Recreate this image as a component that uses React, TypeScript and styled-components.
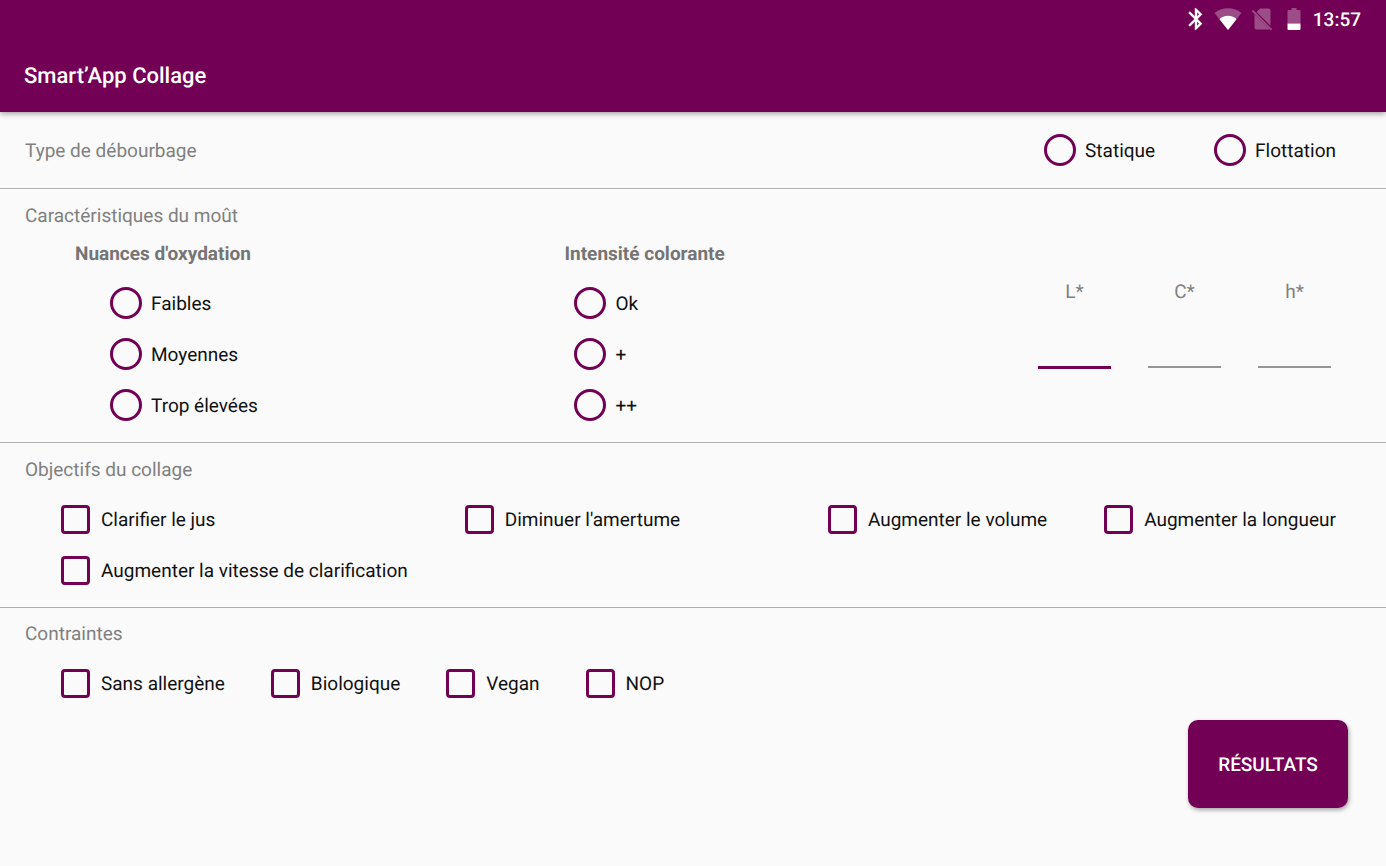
import React from "react";
import styled, { createGlobalStyle } from "styled-components";

const plum = "#720055";

const GlobalStyle = createGlobalStyle`
  *, *::before, *::after { box-sizing: border-box; }
  body {
    margin: 0;
    background: #fafafa;
    color: #111;
    font-family: Roboto, "Noto Sans", sans-serif;
    font-size: 19px;
    line-height: 24px;
    text-rendering: geometricPrecision;
  }
  h1, h2, h3, p { margin: 0; }
`;

const Page = styled.div`
  min-height: 100vh;
  display: flex;
  flex-direction: column;
`;

const Header = styled.header`
  background: ${plum};
  color: #fff;
  box-shadow: 0 1px 6px rgba(0, 0, 0, 0.45);
`;

const StatusBar = styled.div`
  display: flex;
  justify-content: flex-end;
  align-items: center;
  height: 38px;
  padding-right: 25px;
`;

const StatusIcon = styled.svg<{ $gap: number }>`
  flex: none;
  margin-right: ${(p) => p.$gap}px;
  fill: currentColor;
`;

const Clock = styled.time`
  padding-top: 2px;
  font-weight: 500;
`;

const Title = styled.h1`
  display: flex;
  align-items: center;
  height: 74px;
  padding: 3px 24px 0;
  font-size: 22px;
  font-weight: 500;
`;

const Section = styled.section`
  padding: 15px 50px 21px 25px;
  border-bottom: 1px solid #b0b0b0;
`;

const InlineSection = styled(Section)`
  display: flex;
  justify-content: space-between;
  align-items: center;
  padding: 22px 50px 22px 25px;
`;

const LastSection = styled(Section)`
  border-bottom: 0;
  padding-top: 14px;
  padding-bottom: 0;
`;

const SectionTitle = styled.h2`
  color: #808080;
  font-size: 19px;
  font-weight: 400;

  ${InlineSection} > & {
    padding-top: 2px;
  }
`;

const GroupTitle = styled.h3`
  color: #757575;
  font-size: 19px;
  font-weight: 700;
`;

const RadioRow = styled.div`
  display: flex;
  gap: 59px;
`;

const RadioColumn = styled.div<{ $indent: number }>`
  display: grid;
  justify-items: start;
  gap: 19px;
  padding: 21px 0 0 ${(p) => p.$indent}px;
`;

const OptionLabel = styled.label<{ $gap: number }>`
  display: flex;
  align-items: center;
  gap: ${(p) => p.$gap}px;
  min-height: 32px;
  white-space: nowrap;
  cursor: pointer;
`;

const OptionText = styled.span`
  padding-top: 2px;
`;

const RadioInput = styled.input`
  appearance: none;
  flex: none;
  width: 32px;
  height: 32px;
  margin: 0;
  border: 3px solid ${plum};
  border-radius: 50%;

  &:checked {
    background: radial-gradient(${plum} 0 8px, transparent 9px);
  }
`;

const CheckInput = styled.input`
  appearance: none;
  flex: none;
  width: 29px;
  height: 29px;
  margin: 0;
  border: 3px solid ${plum};
  border-radius: 4px;

  &:checked {
    background: ${plum};
    box-shadow: inset 0 0 0 3px #fafafa;
  }
`;

const MustGrid = styled.div`
  display: grid;
  grid-template-columns: 490fr 474fr auto;
  padding: 14px 5px 0 50px;
`;

const Measures = styled.div`
  display: flex;
  gap: 37px;
  padding-top: 38px;
`;

const MeasureLabel = styled.label`
  display: flex;
  flex-direction: column;
  align-items: center;
  gap: 25px;
  width: 73px;
  color: #808080;
`;

const MeasureInput = styled.input<{ $active: boolean }>`
  width: 100%;
  height: 40px;
  padding: 0 4px 8px;
  border: 0;
  background: linear-gradient(
      ${(p) => (p.$active ? plum : "#949494")},
      ${(p) => (p.$active ? plum : "#949494")}
    )
    0 37px / 100% ${(p) => (p.$active ? 3 : 2)}px no-repeat;
  font: inherit;
  text-align: center;
  outline: 0;
`;

const GoalGrid = styled.div`
  display: grid;
  grid-template-columns: auto 1fr auto auto;
  gap: 19px 57px;
  padding: 21px 0 0 36px;
`;

const ConstraintRow = styled.div`
  display: flex;
  flex-wrap: wrap;
  gap: 19px 46px;
  padding: 21px 0 0 36px;
`;

const Actions = styled.div`
  display: flex;
  justify-content: flex-end;
  padding: 21px 38px 56px;
`;

const ResultButton = styled.button`
  min-width: 160px;
  height: 88px;
  padding: 2px 16px 0;
  border: 0;
  border-radius: 10px;
  background: ${plum};
  color: #fff;
  font: inherit;
  font-weight: 500;
  text-transform: uppercase;
  text-rendering: inherit;
  box-shadow: 1px 2px 4px rgba(0, 0, 0, 0.35);
  cursor: pointer;
`;

function Radio({ name, label }: { name: string; label: string }) {
  return (
    <OptionLabel $gap={9}>
      <RadioInput type="radio" name={name} value={label} />
      <OptionText>{label}</OptionText>
    </OptionLabel>
  );
}

function Check({ label }: { label: string }) {
  return (
    <OptionLabel $gap={11}>
      <CheckInput type="checkbox" />
      <OptionText>{label}</OptionText>
    </OptionLabel>
  );
}

function StatusIcons() {
  return (
    <>
      <StatusIcon $gap={5} width="26" height="26" viewBox="0 0 24 24" aria-label="Bluetooth">
        <path
          stroke="currentColor"
          strokeWidth=".2"
          d="M17.71 7.71L12 2h-1v7.59L6.41 5 5 6.41 10.59 12 5 17.59 6.41 19 11 14.41V22h1l5.71-5.71-4.3-4.29 4.3-4.29zM13 5.83l1.88 1.88L13 9.59V5.83zm1.88 10.46L13 18.17v-3.76l1.88 1.88z"
        />
      </StatusIcon>
      <StatusIcon $gap={9} width="28" height="22" viewBox="0 0 28 22" aria-label="Wi-Fi">
        <path opacity=".3" d="M14 22L.5 5C4 2 9 .2 14 .2S24 2 27.500 5z" />
        <path d="M14 22L5.500 11.200c2-2 5-3.400 8.500-3.400s6.500 1.400 8.500 3.400z" />
      </StatusIcon>
      <StatusIcon $gap={14} width="22" height="24" viewBox="0 0 22 24" aria-label="Pas de SIM">
        <g opacity=".3">
          <path d="M9 1.500h8.500a2 2 0 0 1 2 2v15.300L5.600 4.900z" />
          <path d="M3.500 7.200L18.600 22.300a2 2 0 0 1-1.100.2h-12a2 2 0 0 1-2-2z" />
          <path d="M1.900 2.800L.6 4.100 19.900 23.400l1.300-1.300z" />
        </g>
      </StatusIcon>
      <StatusIcon $gap={12} width="14" height="24" viewBox="0 0 14 24" aria-label="Batterie">
        <path opacity=".3" d="M.5 16.500V4a1 1 0 0 1 1-1h3V1h5v2h3a1 1 0 0 1 1 1v12.500z" />
        <path d="M.5 16.500h13V22a1 1 0 0 1-1 1h-11a1 1 0 0 1-1-1z" />
      </StatusIcon>
    </>
  );
}

export default function App() {
  return (
    <Page>
      <GlobalStyle />
      <Header>
        <StatusBar>
          <StatusIcons />
          <Clock>13:57</Clock>
        </StatusBar>
        <Title>Smart’App Collage</Title>
      </Header>
      <main>
        <InlineSection>
          <SectionTitle>Type de débourbage</SectionTitle>
          <RadioRow>
            <Radio name="type" label="Statique" />
            <Radio name="type" label="Flottation" />
          </RadioRow>
        </InlineSection>

        <Section>
          <SectionTitle>Caractéristiques du moût</SectionTitle>
          <MustGrid>
            <div>
              <GroupTitle>Nuances d'oxydation</GroupTitle>
              <RadioColumn $indent={35}>
                <Radio name="nuances" label="Faibles" />
                <Radio name="nuances" label="Moyennes" />
                <Radio name="nuances" label="Trop élevées" />
              </RadioColumn>
            </div>
            <div>
              <GroupTitle>Intensité colorante</GroupTitle>
              <RadioColumn $indent={10}>
                <Radio name="intensite" label="Ok" />
                <Radio name="intensite" label="+" />
                <Radio name="intensite" label="++" />
              </RadioColumn>
            </div>
            <Measures>
              {["L*", "C*", "h*"].map((label, i) => (
                <MeasureLabel key={label}>
                  {label}
                  <MeasureInput type="text" inputMode="decimal" $active={i === 0} />
                </MeasureLabel>
              ))}
            </Measures>
          </MustGrid>
        </Section>

        <Section>
          <SectionTitle>Objectifs du collage</SectionTitle>
          <GoalGrid>
            <Check label="Clarifier le jus" />
            <Check label="Diminuer l'amertume" />
            <Check label="Augmenter le volume" />
            <Check label="Augmenter la longueur" />
            <Check label="Augmenter la vitesse de clarification" />
          </GoalGrid>
        </Section>

        <LastSection>
          <SectionTitle>Contraintes</SectionTitle>
          <ConstraintRow>
            <Check label="Sans allergène" />
            <Check label="Biologique" />
            <Check label="Vegan" />
            <Check label="NOP" />
          </ConstraintRow>
        </LastSection>
        <Actions>
          <ResultButton type="button">Résultats</ResultButton>
        </Actions>
      </main>
    </Page>
  );
}
